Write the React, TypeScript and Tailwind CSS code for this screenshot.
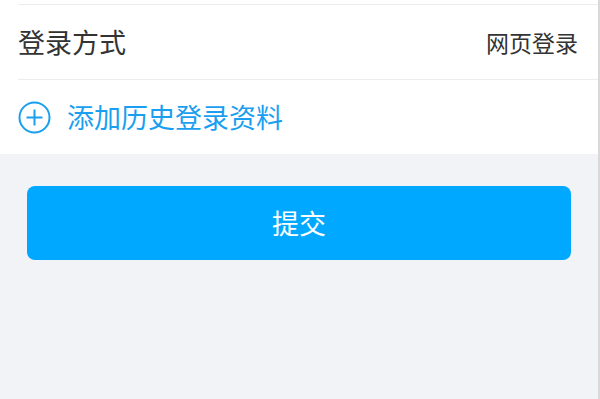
export default function App() {
  return (
    <div
      className="flex h-[399px] w-[600px] flex-col border-r-2 border-[#d9d9d9] bg-[#f2f3f7]"
      style={{ fontFamily: '"Noto Sans CJK SC", "Noto Sans", sans-serif' }}
    >
      <div className="bg-white pl-[18px]">
        <div className="h-[5px] border-b border-[#ececec]" />
        <div className="flex h-[75px] items-center justify-between border-b border-[#ececec] pr-[20px]">
          <span className="text-[27px] text-[#333333]">登录方式</span>
          <span className="text-[23px] text-[#333333]">网页登录</span>
        </div>
        <div className="flex h-[74px] items-center gap-[16px]">
          <svg width="33" height="33" viewBox="0 0 33 33" fill="none">
            <circle cx="16.5" cy="16.5" r="15" stroke="#1a9ff0" strokeWidth="2" />
            <path d="M16.5 8.5v16M8.5 16.5h16" stroke="#1a9ff0" strokeWidth="2" />
          </svg>
          <span className="text-[27px] text-[#1a9ff0]">添加历史登录资料</span>
        </div>
      </div>
      <div className="px-[27px] pt-[32px]">
        <button className="flex h-[74px] w-full items-center justify-center rounded-[8px] bg-[#00a9ff] text-[27px] text-white">
          提交
        </button>
      </div>
    </div>
  );
}
